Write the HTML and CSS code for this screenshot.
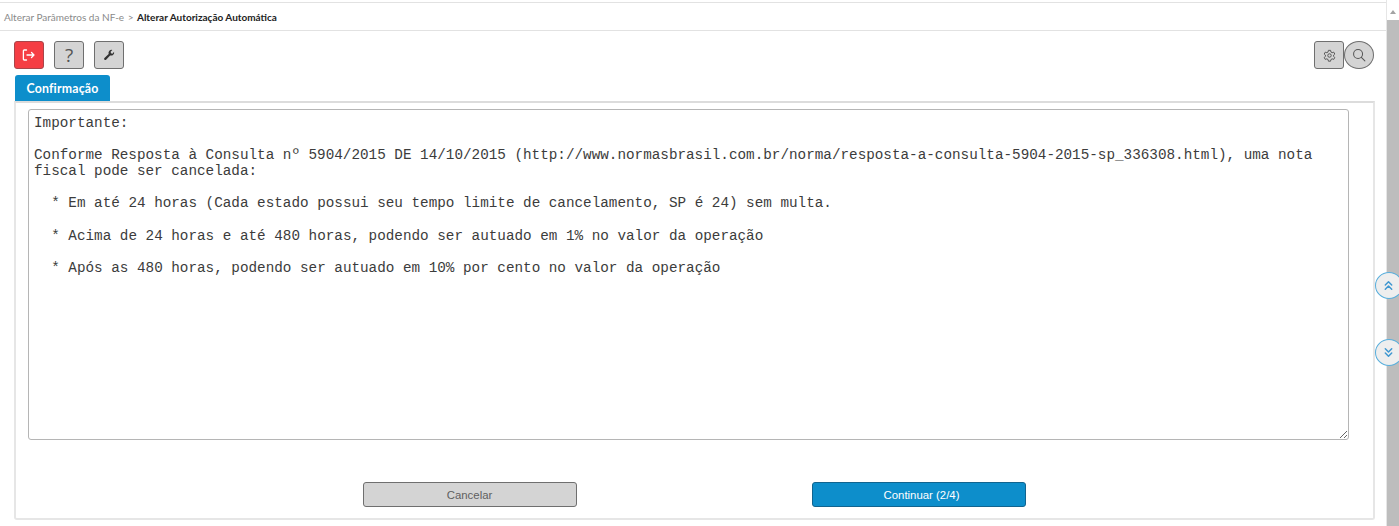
FILE: index.html
```html
<!DOCTYPE html>
<html lang="pt-BR">
<head>
<meta charset="utf-8">
<title>Alterar Autorização Automática</title>
<link rel="stylesheet" href="styles.css">
</head>
<body>
<div class="page">
  <main class="main">
    <header class="crumbs">
      <span class="crumb-parent">Alterar Parâmetros da NF-e</span>
      <span class="crumb-sep">&gt;</span>
      <span class="crumb-current">Alterar Autorização Automática</span>
    </header>
    <div class="toolbar">
      <div class="tool-group">
        <button class="tool tool-red" aria-label="Sair">
          <svg width="16" height="16" viewBox="0 0 16 16" fill="none" stroke="#fff" stroke-width="1.300" stroke-linecap="round" stroke-linejoin="round"><path d="M5.500 3H3.200a.8.8 0 0 0-.8.8v8.400a.8.8 0 0 0 .8.8h2.300"/><path d="M6 8h7M10.500 5.500 13 8l-2.500 2.500"/></svg>
        </button>
        <button class="tool tool-help" aria-label="Ajuda">?</button>
        <button class="tool" aria-label="Ferramentas">
          <svg width="12" height="12" viewBox="0 0 14 14"><path fill="#333" d="M12.900 3.100a3.600 3.600 0 0 1-4.600 4.400L3.600 12.400a1.300 1.300 0 0 1-1.900-1.900l4.900-4.800A3.600 3.600 0 0 1 10.900 1.100L8.900 3.200l.4 1.800 1.700.4z"/></svg>
        </button>
      </div>
      <div class="tool-group-right">
        <button class="tool" aria-label="Configurações">
          <svg width="13" height="13" viewBox="0 0 24 24" fill="none" stroke="#555" stroke-width="1.800" stroke-linejoin="round"><path d="M10 2.500h4l.6 3 2.300 1.300 2.900-1 2 3.500-2.300 2v2.400l2.300 2-2 3.500-2.900-1-2.300 1.300-.6 3h-4l-.6-3-2.300-1.300-2.900 1-2-3.500 2.300-2v-2.400l-2.300-2 2-3.500 2.900 1 2.300-1.300z"/><circle cx="12" cy="12" r="3.200"/></svg>
        </button>
        <button class="tool tool-round" aria-label="Pesquisar">
          <svg width="14" height="14" viewBox="0 0 15 15" fill="none" stroke="#555" stroke-width="1.100" stroke-linecap="round"><circle cx="6.500" cy="6.500" r="4.800"/><path d="M10 10l3.800 3.800"/></svg>
        </button>
      </div>
    </div>
    <div class="tabs"><span class="tab">Confirmação</span></div>
    <section class="panel">
      <textarea class="message" readonly spellcheck="false">Importante:

Conforme Resposta à Consulta nº 5904/2015 DE 14/10/2015 (http://www.normasbrasil.com.br/norma/resposta-a-consulta-5904-2015-sp_336308.html), uma nota fiscal pode ser cancelada:

  * Em até 24 horas (Cada estado possui seu tempo limite de cancelamento, SP é 24) sem multa.

  * Acima de 24 horas e até 480 horas, podendo ser autuado em 1% no valor da operação

  * Após as 480 horas, podendo ser autuado em 10% por cento no valor da operação</textarea>
      <div class="actions">
        <button class="action action-cancel">Cancelar</button>
        <button class="action action-continue">Continuar (2/4)</button>
      </div>
    </section>
  </main>
  <aside class="scrollbar">
    <div class="scroll-arrow"></div>
    <div class="scroll-thumb"></div>
  </aside>
  <button class="float float-up" aria-label="Subir">
    <svg width="11" height="11" viewBox="0 0 12 12" fill="none" stroke="#3f97d0" stroke-width="1.600" stroke-linecap="round" stroke-linejoin="round"><path d="M2.500 5.500 6 2l3.500 3.500M2.500 10 6 6.500 9.500 10"/></svg>
  </button>
  <button class="float float-down" aria-label="Descer">
    <svg width="11" height="11" viewBox="0 0 12 12" fill="none" stroke="#3f97d0" stroke-width="1.600" stroke-linecap="round" stroke-linejoin="round"><path d="M2.500 2 6 5.500 9.500 2M2.500 6.500 6 10l3.500-3.500"/></svg>
  </button>
</div>
</body>
</html>
```
FILE: styles.css
```css
* { box-sizing: border-box; }
html, body { margin: 0; height: 100%; overflow: hidden; background: #fff; }
body { font-family: Lato, "Liberation Sans", sans-serif; }

.page { position: relative; display: flex; width: 1399px; height: 526px; }
.main { width: 1386px; padding-top: 2px; display: flex; flex-direction: column; }

.crumbs {
  height: 29px;
  border-top: 1px solid #e2e2e2;
  border-bottom: 1px solid #e2e2e2;
  padding-left: 4px;
  display: flex;
  align-items: center;
  gap: 3.500px;
  font-size: 10px;
}
.crumb-parent, .crumb-sep { color: #8a8a8a; }
.crumb-current { color: #222; font-weight: 700; }

.toolbar {
  display: flex;
  justify-content: space-between;
  padding: 10px 12px 0 14px;
  height: 44px;
}
.tool-group { display: flex; gap: 10px; }
.tool-group-right { display: flex; }
.tool {
  width: 30px;
  height: 28px;
  padding: 0;
  display: flex;
  align-items: center;
  justify-content: center;
  background: #d4d4d4;
  border: 1px solid #6f6f6f;
  border-radius: 3px;
}
.tool-red { background: #f53e44; border-color: #a9454a; }
.tool-help { color: #555; font-size: 19px; font-weight: 400; font-family: "Open Sans", sans-serif; }
.tool-round { border-radius: 50%; }

.tabs { padding-left: 15px; height: 26px; display: flex; }
.tab {
  width: 95px;
  height: 26px;
  background: #0d8ecb;
  color: #fff;
  font-size: 12.3px;
  font-weight: 700;
  letter-spacing: 0.2px;
  border-radius: 3px 3px 0 0;
  display: flex;
  align-items: center;
  justify-content: center;
}

.panel {
  width: 1361px;
  height: 419px;
  margin-left: 14px;
  border: 2px solid #e6e6e6;
  border-top-color: #dcdcdc;
  border-radius: 0 0 3px 3px;
  padding: 6px 11px 0 12px;
}
.message {
  display: block;
  width: 1321px;
  height: 331px;
  padding: 5px 6px 5px 5px;
  border: 1px solid #b5b5b5;
  border-radius: 3px;
  outline: 0;
  color: #3c3c3c;
  background: #fff;
  font-family: "Liberation Mono", monospace;
  font-size: 14.3px;
  line-height: 16.1px;
}
.actions { display: flex; justify-content: center; gap: 235px; padding-top: 42px; margin-left: -2px; }
.action {
  width: 214px;
  height: 25px;
  padding: 0;
  border-radius: 3px;
  font-family: "Liberation Sans", sans-serif;
  font-size: 11.4px;
}
.action-cancel { background: #d4d4d4; border: 1px solid #6f6f6f; color: #5f5f5f; }
.action-continue { background: #0d8ecb; border: 1px solid #11648f; color: #fff; padding-left: 6px; }

.scrollbar { width: 13px; border-left: 1px solid #e6e6e6; padding-top: 2px; display: flex; flex-direction: column; background: #fff; }
.scroll-arrow {
  width: 0;
  height: 0;
  margin: 8px 0 6px 3px;
  border: 3.500px solid transparent;
  border-top: 0;
  border-bottom: 4px solid #a3a3a3;
}
.scroll-thumb { flex: 1; background: #bdbdbd; }

.float {
  position: absolute;
  left: 1375px;
  width: 28px;
  height: 27px;
  padding: 0 2px 0 0;
  display: flex;
  align-items: center;
  justify-content: center;
  background: #eeeeee;
  border: 1px solid #58aedc;
  border-radius: 50%;
}
.float-up { top: 272px; }
.float-down { top: 339px; }
```
